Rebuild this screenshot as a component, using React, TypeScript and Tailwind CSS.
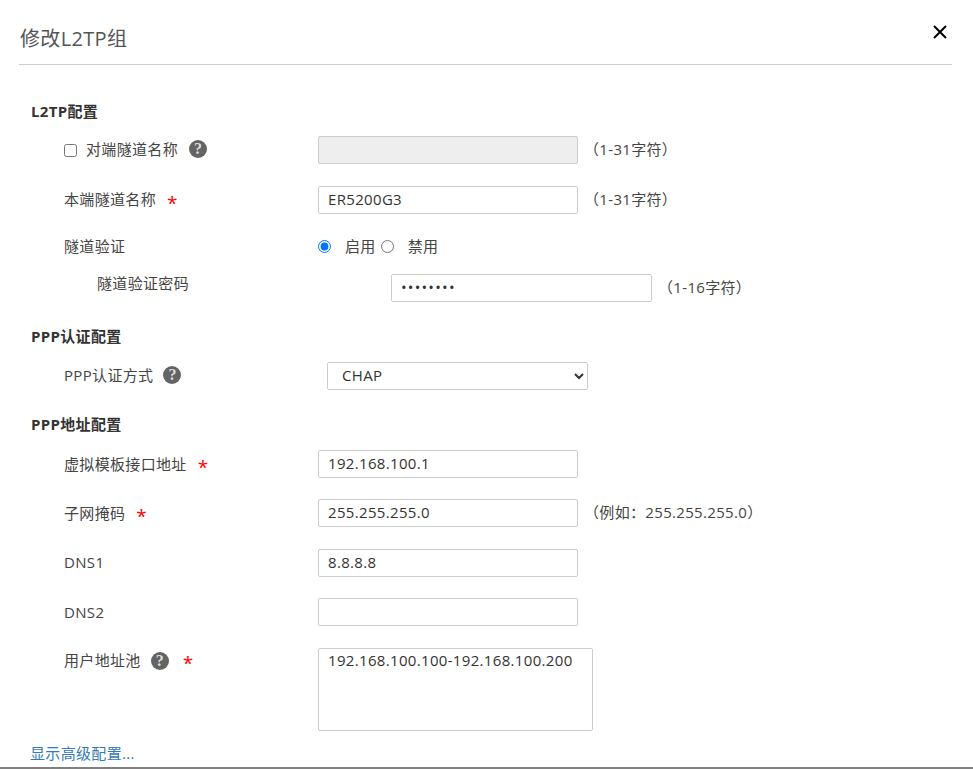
import React from 'react';

const font = "font-['Open_Sans','Noto_Sans_CJK_SC',sans-serif]";
const inputClass = 'h-[28px] w-[260px] rounded-[2px] border border-[#ccc] pb-[2px] pl-[9px] text-[15px] text-[#333] outline-none';

const Help = () => (
  <span className="flex h-[18px] w-[18px] items-center justify-center rounded-full bg-[#646464] font-['Liberation_Serif',serif] text-[16px] font-bold leading-none tracking-normal text-[#ddd]">?</span>
);

const Star = ({ className }: { className: string }) => (
  <span className={`text-[19px] leading-none text-[#f00] ${className}`}>*</span>
);

const Hint = ({ children }: { children: React.ReactNode }) => (
  <span className="relative top-[-1px] ml-[6px] text-[#444]">{children}</span>
);

const App: React.FC = () => {
  return (
    <div className={`flex h-[769px] w-[973px] flex-col overflow-hidden border-b-2 border-[#808080] bg-white text-[15px] tracking-[0.33px] text-[#444] ${font}`}>
      <div className="relative ml-[19px] mr-[21px] h-[65px] border-b border-[#ccc] pt-[23px]">
        <h2 className="pl-[1px] text-[20px] leading-[32px] text-[#555]">修改L2TP组</h2>
        <svg className="absolute right-[4px] top-[24px] h-[16px] w-[16px]" viewBox="0 0 16 16" fill="none" stroke="#000" strokeWidth="2">
          <path d="M2 2 L14 14 M14 2 L2 14" />
        </svg>
      </div>

      <div className="flex flex-col pl-[31px]">
        <h3 className="mt-[36px] font-bold leading-[20px] text-[#333]">L2TP配置</h3>

        <div className="mt-[15px] flex items-center">
          <div className="flex w-[287px] items-center pl-[33px]">
            <input type="checkbox" className="m-0 h-[13px] w-[13px]" />
            <span className="ml-[9px] pb-[2px]">对端隧道名称</span>
            <span className="ml-[11px] pb-[2px]"><Help /></span>
          </div>
          <input className={`${inputClass} bg-[#eee]`} disabled />
          <Hint>（1-31字符）</Hint>
        </div>

        <div className="mt-[22px] flex items-center">
          <div className="flex w-[287px] items-center pl-[33px]">
            <span className="pb-[2px]">本端隧道名称</span>
            <Star className="ml-[11px] mt-[6px]" />
          </div>
          <input className={`${inputClass} bg-white`} defaultValue="ER5200G3" />
          <Hint>（1-31字符）</Hint>
        </div>

        <div className="mt-[21px] flex h-[22px] items-center">
          <div className="w-[287px] pl-[33px]">隧道验证</div>
          <input type="radio" name="auth" defaultChecked className="m-0 h-[13px] w-[13px]" />
          <span className="ml-[14px]">启用</span>
          <input type="radio" name="auth" className="m-0 ml-[5px] h-[13px] w-[13px]" />
          <span className="ml-[14px]">禁用</span>
        </div>

        <div className="mt-[17px] flex items-center">
          <div className="w-[360px] self-start pl-[66px] leading-[18px]">隧道验证密码</div>
          <input type="password" className={`${inputClass} w-[261px] bg-white tracking-[1.2px]`} defaultValue="12345678" />
          <Hint>（1-16字符）</Hint>
        </div>

        <h3 className="mt-[24px] font-bold leading-[20px] text-[#333]">PPP认证配置</h3>

        <div className="mt-[16px] flex items-center">
          <div className="flex w-[296px] items-center pl-[33px]">
            <span className="pb-[2px]">PPP认证方式</span>
            <span className="ml-[10px] pb-[2px]"><Help /></span>
          </div>
          <select className="h-[28px] w-[261px] rounded-[2px] border border-[#ccc] bg-white pb-[2px] pl-[10px] text-[15px] text-[#333]">
            <option>CHAP</option>
          </select>
        </div>

        <h3 className="mt-[24px] font-bold leading-[20px] text-[#333]">PPP地址配置</h3>

        <div className="mt-[16px] flex items-center">
          <div className="flex w-[287px] items-center pl-[33px]">
            <span>虚拟模板接口地址</span>
            <Star className="ml-[11px] mt-[6px]" />
          </div>
          <input className={`${inputClass} bg-white`} defaultValue="192.168.100.1" />
        </div>

        <div className="mt-[21px] flex items-center">
          <div className="flex w-[287px] items-center pl-[33px]">
            <span>子网掩码</span>
            <Star className="ml-[11px] mt-[6px]" />
          </div>
          <input className={`${inputClass} bg-white`} defaultValue="255.255.255.0" />
          <Hint>（例如：255.255.255.0）</Hint>
        </div>

        <div className="mt-[22px] flex items-center">
          <div className="w-[287px] pb-[2px] pl-[33px]">DNS1</div>
          <input className={`${inputClass} bg-white`} defaultValue="8.8.8.8" />
        </div>

        <div className="mt-[21px] flex items-center">
          <div className="w-[287px] pl-[33px]">DNS2</div>
          <input className={`${inputClass} bg-white`} />
        </div>

        <div className="mt-[22px] flex items-start">
          <div className="flex w-[287px] items-center pl-[33px]">
            <span>用户地址池</span>
            <span className="ml-[10px]"><Help /></span>
            <Star className="ml-[14px] mt-[6px]" />
          </div>
          <textarea className="h-[83px] w-[275px] resize-none rounded-[2px] border border-[#ccc] bg-white pl-[9px] pt-0 text-[15px] text-[#333] outline-none" defaultValue="192.168.100.100-192.168.100.200" />
        </div>

        <a className="-ml-[1px] mt-[12px] leading-[20px] text-[#337ab7]">显示高级配置...</a>
      </div>
    </div>
  );
};

export default App;
